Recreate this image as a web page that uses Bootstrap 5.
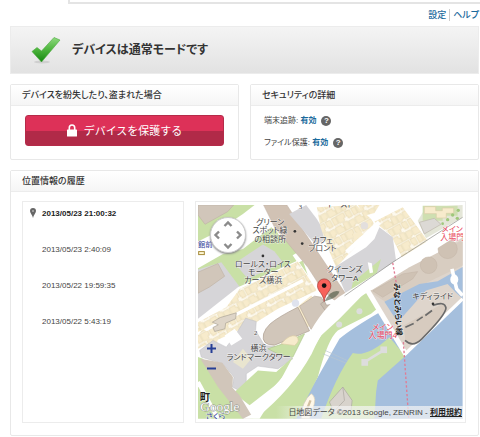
<!DOCTYPE html>
<html lang="ja">
<head>
<meta charset="utf-8">
<meta name="viewport" content="width=device-width, initial-scale=1">
<title>デバイスは通常モードです</title>
<link href="https://cdn.jsdelivr.net/npm/bootstrap@5.3.0/dist/css/bootstrap.min.css" rel="stylesheet">
<style>
body{font-family:"Liberation Sans","Noto Sans CJK JP",sans-serif;font-size:9px;line-height:12px;color:#444;font-feature-settings:"palt"}
a{color:#1a6a9c}
.topbox{height:4px;margin-left:68px;border:solid #e4e4e4;border-width:0 0 2px 2px}
.page{padding:0 1px 0 10px}
.toplinks{height:22px;padding-top:5px}
.toplinks a{height:12px;font-weight:500}
.toplinks a+a{border-left:1px solid #ccc;margin-left:3px;padding-left:3px}
.banner{height:48px;padding-left:20px;gap:11px;background:linear-gradient(#f4f4f4,#e2e2e2);border:1px solid #ececec;margin-bottom:10px}
.banner h1{font-size:12px;line-height:18px;font-weight:700;color:#333}
.panel{border:1px solid #e8e8e8;border-radius:2px;background:#fff}
.panel-title{font-size:9px;line-height:20px;padding:0 11px;color:#333;font-weight:500;background:linear-gradient(#fff,#f5f5f5);border-bottom:1px solid #ececec}
.toprow{display:grid;grid-template-columns:1fr 1fr;gap:11px;margin-bottom:10px}
.protect-area{padding:9px 14px 13px}
.protect{height:31px;font-size:11px;line-height:16px;color:#fff;border:1px solid #b52b49;border-radius:3px;gap:7px;background:linear-gradient(#dd3158 50%,#b12a48 50%)}
.details{font-size:8px;padding:9px 13px;gap:10px}
.help{width:10px;height:10px;border-radius:50%;background:#666;color:#fff;font-size:8px;line-height:10px;font-weight:700;margin-left:5px}
.history{display:grid;grid-template-columns:3fr 5fr;gap:11px;padding:9px 12px 12px 11px}
.boxed{border:1px solid #ececec}
.times{font-size:8px;padding:6px 0}
.times button{display:flex;align-items:flex-start;width:100%;height:36px;padding:0 0 0 19px;border:0;background:none;color:#444;text-align:left}
.times .current{padding-left:7px;gap:6px;font-weight:700;color:#222}
.mapframe{padding:3px 2px}
.mapview{overflow:hidden}
.mapview>svg{display:block;width:100%;height:auto}
.lbl{font-size:24px;fill:#444;text-anchor:middle;paint-order:stroke;stroke:#fff;stroke-opacity:.6;stroke-width:3px}
.red{fill:#e8435a}
.pan{position:absolute;left:12px;top:12px;width:36px;height:36px;border-radius:50%;background:#fff;border:1px solid #ccc;box-shadow:0 1px 2px #888}
.pan svg{display:block}
.zoomer{position:absolute;left:8px;bottom:40px}
.zoomer button{width:12px;height:20px;border:0;background:none}
.credit{position:absolute;right:0;bottom:0;height:13px;padding:0 1px 0 12px;font-size:8px;line-height:13px;background:linear-gradient(90deg,#f5f5f500,#f5f5f5b0 30px)}
.credit a{color:#222;font-weight:700}
</style>
</head>
<body>
<div class="topbox"></div>
<div class="page">
  <nav class="toplinks d-flex justify-content-end" aria-label="メニュー"><a class="text-decoration-none" href="#settings">設定</a><a class="text-decoration-none" href="#help">ヘルプ</a></nav>
  <header class="banner d-flex align-items-center">
    <svg width="30" height="28" viewBox="0 0 30 28" aria-hidden="true"><defs><linearGradient id="ck" x1="0" y1="0" x2="0" y2="1"><stop offset="0" stop-color="#8fd97f"/><stop offset=".5" stop-color="#4cb43c"/><stop offset="1" stop-color="#14870f"/></linearGradient></defs><ellipse cx="11" cy="26" rx="8" ry="1.5" fill="#cfcfcf"/><path d="M1 15.5 6 11.5 10.5 15 23 1.5 29 4 10.5 26Z" fill="url(#ck)" stroke="#4aa93c" stroke-width=".6"/></svg>
    <h1 class="m-0">デバイスは通常モードです</h1>
  </header>
  <div class="toprow">
    <section class="panel">
      <h2 class="panel-title m-0">デバイスを紛失したり、盗まれた場合</h2>
      <div class="protect-area"><button type="button" class="protect w-100 p-0 d-flex align-items-center justify-content-center"><svg width="10" height="13" viewBox="0 0 10 13" fill="none" aria-hidden="true"><path d="M2.3 6V3.7a2.7 2.7 0 0 1 5.4 0V6" stroke="#fff" stroke-width="1.6"/><rect y="5.5" width="10" height="7" rx=".6" fill="#fff"/></svg>デバイスを保護する</button></div>
    </section>
    <section class="panel">
      <h2 class="panel-title m-0">セキュリティの詳細</h2>
      <div class="details d-flex flex-column">
        <div class="d-flex align-items-center">端末追跡:&nbsp;<a class="fw-bold text-decoration-none" href="#track">有効</a><button type="button" class="help border-0 p-0" aria-label="端末追跡のヘルプ">?</button></div>
        <div class="d-flex align-items-center">ファイル保護:&nbsp;<a class="fw-bold text-decoration-none" href="#files">有効</a><button type="button" class="help border-0 p-0" aria-label="ファイル保護のヘルプ">?</button></div>
      </div>
    </section>
  </div>
  <section class="panel">
    <h2 class="panel-title m-0">位置情報の履歴</h2>
    <div class="history">
      <div class="times boxed">
        <button type="button" class="current"><svg width="6" height="10" viewBox="0 0 6 10" aria-hidden="true"><path d="M3 10C2.6 7 0 5.2 0 3a3 3 0 0 1 6 0C6 5.2 3.4 7 3 10Z" fill="#666"/><circle cx="3" cy="3" r="1.1" fill="#aaa"/></svg>2013/05/23 21:00:32</button>
        <button type="button">2013/05/23 2:40:09</button>
        <button type="button">2013/05/22 19:59:35</button>
        <button type="button">2013/05/22 5:43:19</button>
      </div>
      <div class="mapframe boxed">
        <div class="mapview position-relative">
          <svg viewBox="15 18 795 642" role="img" aria-label="横浜の地図">
            <defs>
              <pattern id="houses" width="66" height="56" patternUnits="userSpaceOnUse" patternTransform="rotate(-29)"><rect width="66" height="56" fill="#fdf9ee"/><g fill="#f7ebcc" stroke="#e0d0a4" stroke-width="1.5"><path d="M2 3h19v9h5v14H2zM28 2h15v24H28zM46 5h18v18h-7v4H46zM3 31h14v22H3zM20 30h24v15h-6v9H20zM48 31h16v22H51v-8h-3z"/></g></pattern>
            </defs>
            <rect x="15" y="18" width="795" height="642" fill="#fff"/>
            <!-- north-west blocks -->
            <path d="M15 18H185L150 45 60 105 15 128Z" fill="#c9e0a6"/>
            <path d="M15 18H122L104 38 36 76 15 48Z" fill="#d1c6ba" stroke="#bfb3a6" stroke-width="2"/>
            <path d="M15 208 90 165 150 150 235 85 250 95 350 245 330 185 160 265 80 305 15 340Z" fill="#c9e0a6"/>
            <path d="M250 140 285 115 315 160 280 180Z" fill="#c9e0a6"/>
            <path d="M15 212 85 190 145 270 130 300 15 365Z" fill="#d6d5d8"/>
            <path d="M15 220 75 194 95 232 50 264 15 283Z" fill="#d1c6ba" stroke="#bfb3a6" stroke-width="2"/>
            <path d="M125 193 210 137 245 158 270 190 165 240Z" fill="#d6d5d8"/>
            <path d="M135 265 315 185 360 250 375 285 235 350 190 375 15 460V360Z" fill="#fff"/>
            <path d="M140 270 315 188 372 275 255 330 190 370 15 450V370L100 325Z" fill="url(#houses)"/>
            <path d="M15 405 330 245" stroke="#fff" stroke-width="10"/>
            <path d="M58 370 82 356 130 342 128 360 98 373 96 390 65 398 60 386 76 378Z" fill="#ded5c8" stroke="#a9a194" stroke-width="2"/>
            <!-- promenade and towers -->
            <path d="M212 18H282L335 100 460 287 425 304 390 275 345 205 245 85Z" fill="#d1c2b4" stroke="#c1b1a3" stroke-width="1.5"/>
            <path d="M289 45 340 18 372 60 405 115 370 140Z" fill="#d6d5d8"/>
            <path d="M372 25 490 18 535 60 548 80 430 205 400 135 382 80Z" fill="url(#houses)"/>
            <path d="M495 18H560L545 42 515 50Z" fill="url(#houses)"/>
            <path d="M545 68 630 25 710 132 630 180 595 110Z" fill="url(#houses)"/>
            <path d="M425 205 520 145 545 120 560 85 600 115 610 185 555 225 460 287Z" fill="#d6d5d8"/>
            <path d="M462 160 560 70" stroke="#fff" stroke-width="14"/>
            <circle cx="515" cy="80" r="11" fill="#e3dfdd"/><path d="M480 105l24-8 8 10-26 18z" fill="#f7ebcc"/>
            <path d="M480 250 565 180 550 230 475 275Z" fill="#c9e0a6"/><path d="M525 190l12 3 4 28-10 2z" fill="#fff"/>
            <path d="M675 65 700 25 810 18V55L700 118Z" fill="#e4e6d8"/>
            <path d="M690 20H795V50H750V65H690Z" fill="#cfdfb1"/>
            <path d="M695 23h34v12h20v-8h34v16h-22v14h-30V44h-36z" fill="#f7ebcc" stroke="#d9cda7" stroke-width="2"/>
            <path d="M680 70 725 58 745 76 695 105Z" fill="#dcd9d5" stroke="#bcb7aa" stroke-width="2"/>
            <g fill="#9fc77b"><circle cx="765" cy="62" r="5"/><circle cx="780" cy="48" r="5"/><circle cx="794" cy="58" r="5"/><circle cx="750" cy="74" r="4"/><circle cx="797" cy="34" r="5"/></g>
            <!-- mall -->
            <path d="M235 380 312 325 355 290 410 345 320 400 240 440 215 410Z" fill="#f7ebcc"/>
            <path d="M232 375Q255 355 315 325L350 396 245 439Q204 440 212 405Q217 389 232 375Z" fill="#d1c6ba" stroke="#aa9c8e" stroke-width="2"/>
            <path d="M320 322 365 292 385 295 412 340 398 350 355 392Z" fill="#d1c6ba" stroke="#b8aa9c" stroke-width="2"/>
            <circle cx="308" cy="313" r="11" fill="#dfe3ee"/>
            <path d="M383 315l12-8 6 12 12-2-2 12-14 6z" fill="#c9bdb0" stroke="#aaa096" stroke-width="2"/>
            <path d="M15 410 30 390 75 420 70 440 15 435Z" fill="url(#houses)"/>
            <!-- landmark tower -->
            <path d="M130 405 158 358 190 368 188 395 215 440 260 445 300 480 255 510 195 502 160 525 160 555 138 575 118 565 123 535 90 495 25 475 20 455 60 425 100 445Z" fill="#d6d5d8" stroke="#bcbcc0" stroke-width="1.5"/>
            <path d="M95 410 125 390 148 420 115 440Z" fill="#fff"/><path d="M120 490 150 450 175 480 150 510Z" fill="#e9e5cf"/>
            <path d="M225 450 270 435 335 405 300 475 255 465Z" fill="#c9e0a6" stroke="#adc48d" stroke-width="2"/>
            <path d="M265 435Q290 405 310 412Q325 425 305 440Z" fill="#f7ebcc" stroke="#ddcda4" stroke-width="2"/>
            <path d="M15 475 30 480 120 620 160 660H15Z" fill="#c9e0a6"/>
            <path d="M125 580 195 515 250 520 300 475 260 550 170 620 145 600Z" fill="#c9e0a6"/>
            <path d="M22 480 88 492 120 535 118 566 140 590 182 660H150L75 565Z" fill="#d1c6ba"/>
            <path d="M15 550 75 660" stroke="#fff" stroke-width="12"/>
            <!-- waterfront -->
            <path d="M545 275 700 185 810 115V310L640 470 520 270Z" fill="#ded5cc"/>
            <path d="M530 278 650 205 810 123V200L580 310Z" fill="#d8cdc1"/>
            <g fill="#cfc2b4" stroke="#c2b5a6" stroke-width="1.5"><circle cx="708" cy="199" r="25"/><circle cx="765" cy="150" r="29"/><path d="M540 276 630 225 675 218 660 240 570 295Z"/></g>
            <path d="M575 309 680 255 735 247 810 204V300L790 282 765 255 700 275 615 370Z" fill="#a5bfdd"/>
            <path d="M810 298V660H300L375 535 440 420Q475 390 565 338L640 465Z" fill="#a5bfdd"/>
            <path d="M440 360 520 278 553 330 535 345 435 395Q405 420 375 535L310 660H170L300 535 385 410Z" fill="#c9e0a6"/>
            <path d="M480 463Q525 475 590 415L638 472 555 545 550 580 545 660H385Q430 530 480 463Z" fill="#c9e0a6"/>
            <path d="M180 645Q285 560 340 460Q390 350 450 307L810 80" fill="none" stroke="#fff" stroke-width="34"/>
            <path d="M150 660 180 645 225 620 200 660Z" fill="#fff"/>
            <path d="M455 291 600 190 810 55" fill="none" stroke="#898985" stroke-width="2"/>
            <path d="M525 276 640 468" stroke="#fff" stroke-width="15"/>
            <path d="M810 300 635 468" stroke="#fff" stroke-width="10"/>
            <path d="M778 210 792 270 810 290" fill="none" stroke="#fff" stroke-width="11"/><ellipse cx="785" cy="242" rx="12" ry="15" fill="#fff"/>
            <path d="M633 380 740 320 Q765 312 760 332Q745 365 680 426Q655 443 638 425Z" fill="#d7cbbf"/>
            <path d="M720 320Q756 306 760 327Q760 348 687 421Q660 447 637 425M638 385 663 374M672 366 690 354M698 350 718 335" fill="none" stroke="#6b6b6b" stroke-width="5"/>
            <path d="M515 490 572 455" stroke="#ddd" stroke-width="8"/><g fill="#ddd"><rect x="506" y="481" width="20" height="20"/><rect x="563" y="443" width="20" height="20"/><circle cx="439" cy="377" r="9"/><circle cx="500" cy="337" r="9"/></g>
            <path d="M397 455 465 486M390 465 460 493" stroke="#b8c6ce" stroke-width="2"/>
            <path d="M325 660Q325 610 355 585Q375 595 358 635L350 660Z" fill="#fff8e9" stroke="#d8cdb8" stroke-width="2"/><path d="M335 650l18-45" stroke="#d2bfa0" stroke-width="7"/>
            <path d="M410 610 450 565 478 605 475 635 425 645Z" fill="#d8d3cc" stroke="#aaa69e" stroke-width="2"/><path d="M450 565 455 605 422 640" fill="none" stroke="#aaa69e" stroke-width="2"/>
            <path d="M600 192 612 260M632 430 648 660" stroke="#e07c94" stroke-width="4" stroke-dasharray="7 6"/>
            <path d="M400 210 430 245" stroke="#e5939d" stroke-width="3" stroke-dasharray="5 5"/>
            <!-- place names -->
            <g fill="#333"><circle cx="306" cy="97" r="4"/><circle cx="328" cy="134" r="4"/><circle cx="210" cy="171" r="4"/><circle cx="721" cy="315" r="4"/></g>
            <g class="lbl">
              <text x="232" y="78">グリーン</text><text x="231" y="103">スポット緑</text><text x="232" y="128">の相談所</text>
              <text x="389" y="131">カフェ</text><text x="389" y="155">ブロント</text>
              <text x="210" y="205">ロールス・ロイス</text><text x="211" y="229">モーター</text><text x="211" y="253">カーズ横浜</text>
              <text x="456" y="220">クイーンズ</text><text x="456" y="247">タワーA</text>
              <text x="197" y="458">横浜</text><text x="197" y="483">ランドマークタワー</text>
              <text x="720" y="299">キディライド</text>
              <text x="188" y="408" style="font:20px 'Liberation Serif',serif">2</text><text x="323" y="31" style="font:20px 'Liberation Serif',serif">3</text><text x="440" y="25">イースト</text>
              <text x="36" y="607" style="font-size:31px;font-weight:700;fill:#222">町</text>
              <text x="68" y="661" style="fill:#33429b">さくら</text><text x="37" y="144" style="font-size:22px;fill:#33429b">館前</text>
              <text x="570" y="394" class="red">メイン</text><text x="570" y="418" class="red">入場門4</text>
              <text x="779" y="99" class="red">メイン</text><text x="779" y="123" class="red">入場門</text>
              <text transform="translate(615 332) rotate(87)" y="8" style="fill:#222;font-weight:700">みなとみらい線</text>
            </g>
            <g fill="#fff8d8" stroke="#a58a38" stroke-width="3"><rect x="17" y="158" width="17" height="9"/></g>
            <text x="22" y="638" style="font:40px 'Liberation Serif',serif;fill:#fff;stroke:#8d918b;stroke-width:3px;paint-order:stroke">Google</text>
            <!-- position marker -->
            <path d="M395 308Q415 270 440 278Q436 297 395 308Z" fill="#34452f" fill-opacity=".55"/>
            <path d="M394 308C390 280 374 279 374 260A20 20 0 0 1 414 260C414 279 398 280 394 308Z" fill="#f8625b" stroke="#9d332e" stroke-width="2"/><circle cx="394" cy="260" r="7" fill="#111"/>
          </svg>
          <button type="button" class="pan p-0" aria-label="地図を移動"><svg width="34" height="34" viewBox="0 0 34 34" fill="none" stroke="#8b8b8b" stroke-width="2.4" aria-hidden="true"><path d="M13.5 8 17 4.5 20.5 8M13.5 26 17 29.5 20.5 26M8 13.5 4.5 17 8 20.5M26 13.5 29.5 17 26 20.5"/></svg></button>
          <div class="zoomer d-flex flex-column">
            <button type="button" class="p-0 d-flex align-items-center" aria-label="拡大"><svg width="11" height="11" viewBox="0 0 11 11" stroke="#263f96" stroke-width="2" aria-hidden="true"><path d="M5.5 1V10M1 5.5H10"/></svg></button>
            <button type="button" class="p-0 d-flex align-items-center" aria-label="縮小"><svg width="11" height="11" viewBox="0 0 11 11" stroke="#263f96" stroke-width="2" aria-hidden="true"><path d="M1 5.5H10"/></svg></button>
          </div>
          <div class="credit text-nowrap">日地図データ ©2013 Google, ZENRIN - <a href="#terms">利用規約</a></div>
        </div>
      </div>
    </div>
  </section>
</div>
<script src="https://cdn.jsdelivr.net/npm/bootstrap@5.3.0/dist/js/bootstrap.bundle.min.js"></script>
</body>
</html>
